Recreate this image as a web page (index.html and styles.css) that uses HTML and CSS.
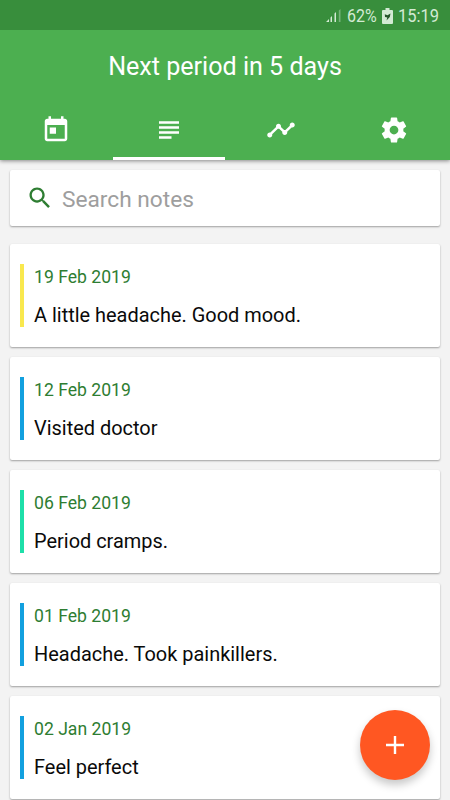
FILE: index.html
```html
<!DOCTYPE html>
<html lang="en">
  <head>
    <meta charset="UTF-8" />
    <meta name="viewport" content="width=device-width, initial-scale=1.0" />
    <title>Notes</title>
    <link rel="stylesheet" href="styles.css">
  </head>
  <body>
    <header class="header">
      <div class="status-bar">
        <svg class="signal" viewBox="0 0 16 15">
          <path d="M0 14l3-3v3zM4.500 9.500l1.500-1.500v6H4.500zM8.500 5.500L10 4v10H8.500z" />
          <path class="dim" d="M12.800 2.500L14.500 1v13h-1.700z" />
        </svg>
        <span class="battery-level">62%</span>
        <svg class="battery" viewBox="0 0 11 16">
          <path d="M3.500 0h4v2H10a1 1 0 0 1 1 1v12a1 1 0 0 1-1 1H1a1 1 0 0 1-1-1V3a1 1 0 0 1 1-1h2.500z" />
          <path class="bolt" d="M2.800 6.300l2.700.9L8.500 5.500 7.800 9 4.500 12.500l.8-3-2.300-.5z" />
        </svg>
        <span class="clock">15:19</span>
      </div>
      <h1>Next period in 5 days</h1>
      <nav>
        <a href="#" aria-label="Calendar">
          <svg viewBox="0 0 24 24"><path d="M19 3h-1V1h-2v2H8V1H6v2H5c-1.110 0-1.990.9-1.990 2L3 19c0 1.100.89 2 2 2h14c1.100 0 2-.9 2-2V5c0-1.100-.9-2-2-2zm0 16H5V8h14v11zM7 10h5v5H7z" /></svg>
        </a>
        <a href="#" class="active" aria-label="Notes">
          <svg viewBox="0 0 24 24"><path d="M14 17H4v2h10v-2zm6-8H4v2h16V9zM4 15h16v-2H4v2zM4 5v2h16V5H4z" /></svg>
        </a>
        <a href="#" aria-label="Chart">
          <svg viewBox="0 0 24 24"><path d="M23 8c0 1.100-.9 2-2 2-.18 0-.35-.02-.51-.07l-3.560 3.550c.05.16.07.34.07.52 0 1.100-.9 2-2 2s-2-.9-2-2c0-.18.02-.36.07-.52l-2.550-2.550c-.16.05-.34.07-.52.07s-.36-.02-.52-.07l-4.550 4.560c.05.16.07.33.07.51 0 1.100-.9 2-2 2s-2-.9-2-2 .9-2 2-2c.18 0 .35.02.51.07l4.560-4.550C8.020 9.360 8 9.180 8 9c0-1.100.9-2 2-2s2 .9 2 2c0 .18-.02.36-.07.52l2.550 2.550c.16-.05.34-.07.52-.07s.36.02.52.07l3.550-3.560C19.020 8.350 19 8.180 19 8c0-1.100.9-2 2-2s2 .9 2 2z" /></svg>
        </a>
        <a href="#" aria-label="Settings">
          <svg viewBox="0 0 24 24"><path d="M19.430 12.980c.04-.32.07-.64.07-.98s-.03-.66-.07-.98l2.110-1.650c.19-.15.24-.42.12-.64l-2-3.460c-.12-.22-.39-.3-.61-.22l-2.490 1c-.52-.4-1.080-.73-1.690-.98l-.38-2.650C14.460 2.180 14.250 2 14 2h-4c-.25 0-.46.18-.49.42l-.38 2.650c-.61.25-1.170.59-1.690.98l-2.490-1c-.23-.09-.49 0-.61.22l-2 3.460c-.13.22-.07.49.12.64l2.110 1.650c-.04.32-.07.65-.07.98s.03.66.07.98l-2.110 1.650c-.19.15-.24.42-.12.64l2 3.460c.12.22.39.3.61.22l2.490-1c.52.4 1.080.73 1.690.98l.38 2.650c.03.24.24.42.49.42h4c.25 0 .46-.18.49-.42l.38-2.650c.61-.25 1.170-.59 1.690-.98l2.490 1c.23.09.49 0 .61-.22l2-3.460c.12-.22.07-.49-.12-.64l-2.110-1.650zM12 15.500c-1.930 0-3.500-1.570-3.500-3.500s1.570-3.500 3.500-3.500 3.500 1.570 3.500 3.500-1.570 3.500-3.500 3.500z" /></svg>
        </a>
      </nav>
    </header>

    <main>
      <form class="search">
        <svg viewBox="0 0 24 24"><path d="M15.500 14h-.79l-.28-.27C15.410 12.590 16 11.110 16 9.500 16 5.910 13.090 3 9.500 3S3 5.910 3 9.500 5.910 16 9.500 16c1.610 0 3.090-.59 4.230-1.570l.27.28v.79l5 4.990L20.490 19l-4.990-5zm-6 0C7.010 14 5 11.990 5 9.500S7.010 5 9.500 5 14 7.010 14 9.500 11.990 14 9.500 14z" /></svg>
        <input type="text" name="query" placeholder="Search notes" />
      </form>

      <article class="note">
        <div class="note-body yellow">
          <time>19 Feb 2019</time>
          <p>A little headache. Good mood.</p>
        </div>
      </article>
      <article class="note">
        <div class="note-body blue">
          <time>12 Feb 2019</time>
          <p>Visited doctor</p>
        </div>
      </article>
      <article class="note">
        <div class="note-body teal">
          <time>06 Feb 2019</time>
          <p>Period cramps.</p>
        </div>
      </article>
      <article class="note">
        <div class="note-body blue">
          <time>01 Feb 2019</time>
          <p>Headache. Took painkillers.</p>
        </div>
      </article>
      <article class="note">
        <div class="note-body blue">
          <time>02 Jan 2019</time>
          <p>Feel perfect</p>
        </div>
      </article>
    </main>

    <button class="add" type="button" aria-label="Add note">
      <svg viewBox="0 0 18 18"><path d="M7.800 0h2.400v7.800H18v2.400h-7.800V18H7.800v-7.800H0V7.800h7.800z" /></svg>
    </button>
  </body>
</html>
```

FILE: styles.css
```css
* {
  box-sizing: border-box;
}

body {
  margin: 0;
  height: 800px;
  overflow: hidden;
  background-color: #f3f3f3;
  font-family: Roboto, sans-serif;
}

.header {
  position: relative;
  height: 160px;
  background-color: #4caf50;
  color: white;
  box-shadow: 0 1px 4px rgba(0, 0, 0, 0.45);
}

.status-bar {
  display: flex;
  align-items: center;
  justify-content: flex-end;
  height: 30px;
  padding: 1px 11px 0 0;
  background-color: #388e3c;
  color: #d3ead4;
  font-size: 18px;
  line-height: 29px;
}

.status-bar svg {
  fill: #d3ead4;
}

.signal {
  width: 16px;
  height: 15px;
  margin-right: 5px;
}

.signal .dim {
  opacity: 0.4;
}

.battery {
  width: 11px;
  height: 16px;
  margin: 0 5px;
}

.battery .bolt {
  fill: #25552a;
}

.battery-level {
  width: 30px;
  transform: scaleX(0.89);
  transform-origin: left;
}

.clock {
  width: 41px;
  transform: scaleX(0.915);
  transform-origin: left;
}

h1 {
  margin: 0;
  height: 70px;
  font-size: 25.1px;
  font-weight: 400;
  line-height: 73px;
  text-align: center;
}

nav {
  display: flex;
  height: 60px;
}

nav a {
  display: flex;
  flex: 1;
  justify-content: center;
  padding-top: 15px;
  border-bottom: 3px solid transparent;
}

nav a.active {
  border-bottom-color: white;
}

nav svg {
  width: 30px;
  height: 30px;
  fill: white;
}

main {
  padding: 10px 10px 0;
}

.search,
.note {
  background-color: white;
  border-radius: 2px;
  box-shadow: 0 1px 2px rgba(0, 0, 0, 0.35);
}

.search {
  display: flex;
  align-items: center;
  height: 56px;
  margin-bottom: 18px;
  padding-left: 16px;
}

.search svg {
  width: 28px;
  height: 28px;
  fill: #2e7d32;
}

.search input {
  flex: 1;
  margin-left: 8px;
  padding: 2px 0 0;
  border: none;
  outline: none;
  font-family: inherit;
  font-size: 22.7px;
}

.search input::placeholder {
  color: #9e9e9e;
}

.note {
  height: 103px;
  margin-bottom: 10px;
  padding: 20px 10px;
}

.note-body {
  height: 63px;
  padding-left: 10px;
  border-left: 4px solid;
}

.yellow {
  border-color: #f9e84e;
}

.blue {
  border-color: #12a0df;
}

.teal {
  border-color: #1ddfa9;
}

time {
  display: block;
  color: #2e7d32;
  font-size: 17.6px;
  line-height: 26px;
}

.note p {
  margin: 11px 0 0;
  color: #0a0a0a;
  font-size: 19.95px;
  line-height: 28px;
}

.add {
  position: absolute;
  right: 20px;
  bottom: 20px;
  display: flex;
  align-items: center;
  justify-content: center;
  width: 70px;
  height: 70px;
  border: none;
  border-radius: 50%;
  background-color: #ff5722;
  box-shadow: 0 5px 8px rgba(0, 0, 0, 0.22);
}

.add svg {
  width: 18px;
  height: 18px;
  fill: white;
}
```
